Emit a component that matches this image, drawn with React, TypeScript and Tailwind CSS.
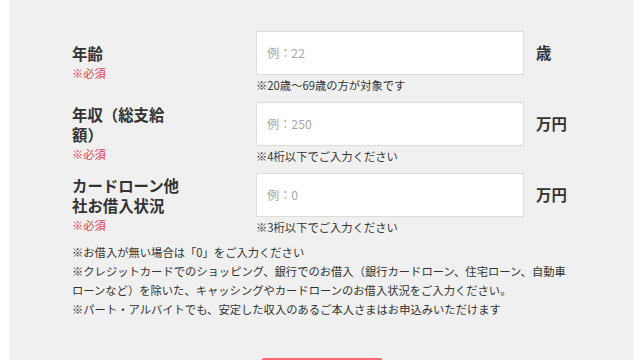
import React from "react";

const font = { fontFamily: '"Noto Sans CJK JP", "Noto Sans", sans-serif' };

function Row({
  label,
  placeholder,
  unit,
  hint,
}: {
  label: React.ReactNode;
  placeholder: string;
  unit: string;
  hint: string;
}) {
  return (
    <div className="flex items-center">
      <div className="w-[184px] shrink-0 pt-[2px]">
        <div className="w-[110px] text-[15.4px] leading-[20px] font-bold text-[#333]">{label}</div>
        <div className="text-[11.3px] leading-[20px] text-[#e8384f]">※必須</div>
      </div>
      <div className="flex flex-col">
        <div className="flex items-center">
          <div className="w-[268px] h-[44px] bg-white border border-[#dcdcdc] flex items-center pl-[10px] text-[12.2px] text-[#a8a8a8]">
            {placeholder}
          </div>
          <div className="ml-[12px] text-[15.4px] font-bold text-[#333]">{unit}</div>
        </div>
        <div className="mt-[2px] text-[11.3px] leading-[16px] text-[#333]">{hint}</div>
      </div>
    </div>
  );
}

export default function App() {
  return (
    <div className="w-[640px] h-[360px] bg-white overflow-hidden" style={font}>
      <div className="ml-[9px] w-[624px] h-[360px] bg-[#f0f0f0] pt-[31px] pl-[63px] flex flex-col">
        <div className="flex flex-col gap-[9px]">
          <Row label="年齢" placeholder="例：22" unit="歳" hint="※20歳～69歳の方が対象です" />
          <Row label="年収（総支給額）" placeholder="例：250" unit="万円" hint="※4桁以下でご入力ください" />
          <Row label="カードローン他社お借入状況" placeholder="例：0" unit="万円" hint="※3桁以下でご入力ください" />
        </div>
        <div className="mt-[8px] w-[504px] text-[11.3px] leading-[19px] text-[#333]">
          <p>※お借入が無い場合は「0」をご入力ください</p>
          <p>
            ※クレジットカードでのショッピング、銀行でのお借入（銀行カードローン、住宅ローン、自動車ローンなど）を除いた、キャッシングやカードローンのお借入状況をご入力ください。
          </p>
          <p>※パート・アルバイトでも、安定した収入のあるご本人さまはお申込みいただけます</p>
        </div>
        <div className="mt-[39px] ml-[189px] w-[122px] h-[20px] shrink-0 bg-[#ff6673] rounded-t-[4px]" />
      </div>
    </div>
  );
}
